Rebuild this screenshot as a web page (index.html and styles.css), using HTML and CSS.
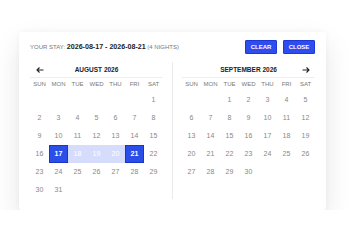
FILE: index.html
```html
<!DOCTYPE html>
<html lang="en">
<head>
    <meta charset="UTF-8">
    <title>Your stay</title>
    <link rel="stylesheet" href="styles.css">
</head>
<body>
    <div class="picker">
        <div class="picker-head">
            <div class="stay">Your stay: <strong>2026-08-17 - 2026-08-21</strong> (4 nights)</div>
            <div class="btns">
                <button class="btn">CLEAR</button>
                <button class="btn">CLOSE</button>
            </div>
        </div>
        <div class="months">
            <div class="month">
                <div class="month-head">
                    <span class="arrow">
                        <svg width="8" height="6" viewBox="0 0 8 6"><path d="M7.5 3H1M3.5 0.5L1 3l2.5 2.5" fill="none" stroke="#222" stroke-width="1.1"/></svg>
                    </span>
                    <span class="title">AUGUST 2026</span>
                    <span></span>
                </div>
                <div class="days" id="aug"></div>
            </div>
            <div class="sep"></div>
            <div class="month">
                <div class="month-head">
                    <span></span>
                    <span class="title">SEPTEMBER 2026</span>
                    <span class="arrow">
                        <svg width="8" height="6" viewBox="0 0 8 6"><path d="M0.5 3H7M4.5 0.5L7 3 4.5 5.5" fill="none" stroke="#222" stroke-width="1.1"/></svg>
                    </span>
                </div>
                <div class="days" id="sep"></div>
            </div>
        </div>
    </div>
    <script>
        const nomes = ['SUN', 'MON', 'TUE', 'WED', 'THU', 'FRI', 'SAT'];

        // Monta um mês: deslocamento do dia 1, total de dias
        function montarMes(el, inicio, total, marcar) {
            let html = nomes.map(n => `<div class="dow">${n}</div>`).join('');
            for (let i = 0; i < inicio; i++) html += '<div class="day"></div>';
            for (let d = 1; d <= total; d++) {
                let cls = 'day';
                if (marcar && (d === 17 || d === 21)) cls += ' selected';
                else if (marcar && d > 17 && d < 21) cls += ' in-range';
                html += `<div class="${cls}">${d}</div>`;
            }
            el.innerHTML = html;
        }

        montarMes(document.getElementById('aug'), 6, 31, true);
        montarMes(document.getElementById('sep'), 2, 30, false);
    </script>
</body>
</html>
```

FILE: styles.css
```css
body {
    margin: 0;
    padding: 32px 0 0 19px;
    background: #fff;
    font-family: "Liberation Sans", Arial, sans-serif;
}
.picker {
    width: 307px;
    box-sizing: border-box;
    padding: 8px 11px 11px 11px;
    background: #fff;
    border-radius: 3px;
    box-shadow: 0 12px 28px rgba(0, 0, 0, 0.1), 0 0 6px rgba(0, 0, 0, 0.04);
}
.picker-head {
    display: flex;
    align-items: center;
    justify-content: space-between;
    height: 14px;
    margin-bottom: 8px;
}
.stay {
    font-size: 6px;
    color: #777;
    text-transform: uppercase;
}
.stay strong {
    font-size: 7.1px;
    color: #222;
}
.btns {
    display: flex;
    gap: 6px;
}
.btn {
    width: 32px;
    height: 14px;
    padding: 0;
    background: #2f4cef;
    border: 1px solid #1c38d6;
    border-radius: 1px;
    color: #fff;
    font-family: "Liberation Sans", Arial, sans-serif;
    font-weight: bold;
    font-size: 6px;
}
.months {
    display: grid;
    grid-template-columns: 1fr 1px 1fr;
    column-gap: 9px;
}
.sep {
    background: #ebebeb;
}
.month-head {
    display: grid;
    grid-template-columns: 19px 1fr 19px;
    align-items: center;
    height: 15px;
    border-bottom: 1px solid #eee;
}
.arrow {
    display: flex;
    justify-content: center;
}
.title {
    text-align: center;
    font-weight: bold;
    font-size: 6.5px;
    color: #222;
}
.days {
    display: grid;
    grid-template-columns: repeat(7, 19px);
}
.dow {
    height: 13px;
    line-height: 13px;
    text-align: center;
    font-size: 6px;
    color: #777;
}
.day {
    height: 18px;
    line-height: 18px;
    text-align: center;
    font-size: 7px;
    color: #888;
}
.day.selected {
    background: #2b4ee8;
    border: 1px solid #1a36c8;
    line-height: 16px;
    color: #fff;
    font-weight: bold;
    box-sizing: border-box;
}
.day.in-range {
    background: #d6ddfc;
    color: #fff;
}
```
